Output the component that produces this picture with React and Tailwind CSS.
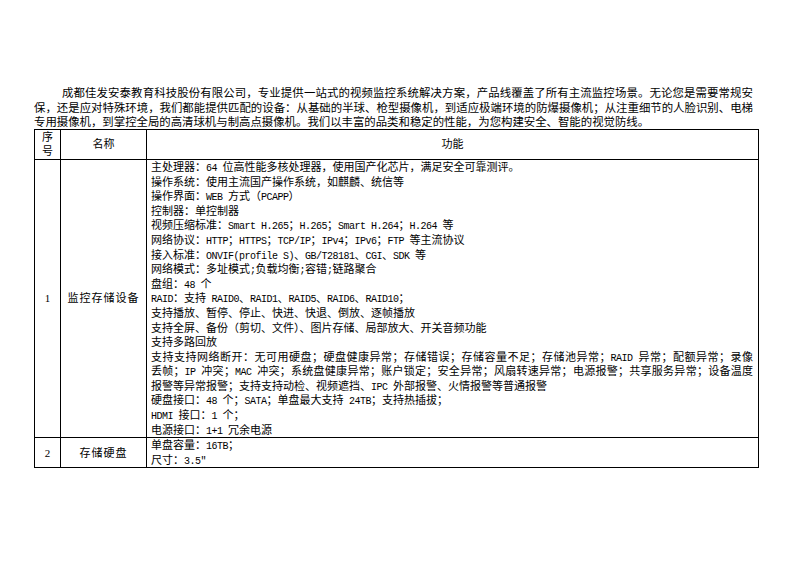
import React from 'react';

const intro = [
  '成都佳发安泰教育科技股份有限公司，专业提供一站式的视频监控系统解决方案，产品线覆盖了所有主流监控场景。无论您是需要常规安',
  '保，还是应对特殊环境，我们都能提供匹配的设备：从基础的半球、枪型摄像机，到适应极端环境的防爆摄像机；从注重细节的人脸识别、电梯',
  '专用摄像机，到掌控全局的高清球机与制高点摄像机。我们以丰富的品类和稳定的性能，为您构建安全、智能的视觉防线。',
];

// full: 该行排满整列（折行），需两端对齐
const specLines = [
  { t: '主处理器：64 位高性能多核处理器，使用国产化芯片，满足安全可靠测评。' },
  { t: '操作系统：使用主流国产操作系统，如麒麟、统信等' },
  { t: '操作界面：WEB 方式（PCAPP）' },
  { t: '控制器：单控制器' },
  { t: '视频压缩标准：Smart H.265；H.265；Smart H.264；H.264 等' },
  { t: '网络协议：HTTP；HTTPS；TCP/IP；IPv4；IPv6；FTP 等主流协议' },
  { t: '接入标准：ONVIF(profile S)、GB/T28181、CGI、SDK 等' },
  { t: '网络模式：多址模式;负载均衡;容错;链路聚合' },
  { t: '盘组：48 个' },
  { t: 'RAID：支持 RAID0、RAID1、RAID5、RAID6、RAID10；' },
  { t: '支持播放、暂停、停止、快进、快退、倒放、逐帧播放' },
  { t: '支持全屏、备份（剪切、文件）、图片存储、局部放大、开关音频功能' },
  { t: '支持多路回放' },
  { t: '支持支持网络断开：无可用硬盘；硬盘健康异常；存储错误；存储容量不足；存储池异常；RAID 异常；配额异常；录像', full: true },
  { t: '丢帧；IP 冲突；MAC 冲突；系统盘健康异常；账户锁定；安全异常；风扇转速异常；电源报警；共享服务异常；设备温度', full: true },
  { t: '报警等异常报警；支持支持动检、视频遮挡、IPC 外部报警、火情报警等普通报警' },
  { t: '硬盘接口：48 个；SATA；单盘最大支持 24TB；支持热插拔；' },
  { t: 'HDMI 接口：1 个；' },
  { t: '电源接口：1+1 冗余电源' },
];

const diskLines = [{ t: '单盘容量：16TB；' }, { t: '尺寸：3.5″' }];

// 半角字符按宋体的半宽（0.5em）排：等宽字体收紧字距近似
function Mixed({ text }) {
  const parts = text.split(/([\x20-\x7E″]+)/);
  return parts.map((p, i) =>
    /^[\x20-\x7E″]+$/.test(p) ? (
      <span key={i} className="font-['Liberation_Mono',monospace] text-[10px] leading-none tracking-[-0.5px]">
        {p}
      </span>
    ) : (
      p
    )
  );
}

function Lines({ lines }) {
  return (
    <div className="text-left">
      {lines.map((l, i) => (
        <div
          key={i}
          className={
            l.full
              ? 'h-[14.6px] overflow-visible whitespace-nowrap [text-align-last:justify]'
              : 'h-[14.6px] overflow-visible whitespace-nowrap'
          }
        >
          <Mixed text={l.t} />
        </div>
      ))}
    </div>
  );
}

export default function App() {
  return (
    <div className="w-[793px] h-[561px] bg-white text-black pt-[86px] pl-[34px] font-['Liberation_Serif','Noto_Sans_CJK_SC',serif]">
      <div className="w-[719px] text-[11.4px] leading-[14.6px]">
        <div className="pl-[28px] [text-align-last:justify]">{intro[0]}</div>
        <div className="[text-align-last:justify]">{intro[1]}</div>
        <div>{intro[2]}</div>
      </div>

      <table className="w-[725px] -mt-px border-collapse border border-black text-[11px] leading-[14.6px] table-fixed">
        <colgroup>
          <col className="w-[26px]" />
          <col className="w-[86px]" />
          <col />
        </colgroup>
        <thead>
          <tr>
            <th className="border border-black font-normal text-center align-middle p-0">
              序<br />号
            </th>
            <th className="border border-black font-normal text-center align-middle p-0">名称</th>
            <th className="border border-black font-normal text-center align-middle p-0">功能</th>
          </tr>
        </thead>
        <tbody>
          <tr>
            <td className="border border-black text-center align-middle p-0">1</td>
            <td className="border border-black text-center align-middle p-0 tracking-[1px]">监控存储设备</td>
            <td className="border border-black align-top pl-[4px] pr-[5px] py-0">
              <Lines lines={specLines} />
            </td>
          </tr>
          <tr>
            <td className="border border-black text-center align-middle p-0">2</td>
            <td className="border border-black text-center align-middle p-0 tracking-[1px]">存储硬盘</td>
            <td className="border border-black align-top pl-[4px] pr-[5px] py-0">
              <Lines lines={diskLines} />
            </td>
          </tr>
        </tbody>
      </table>
    </div>
  );
}
